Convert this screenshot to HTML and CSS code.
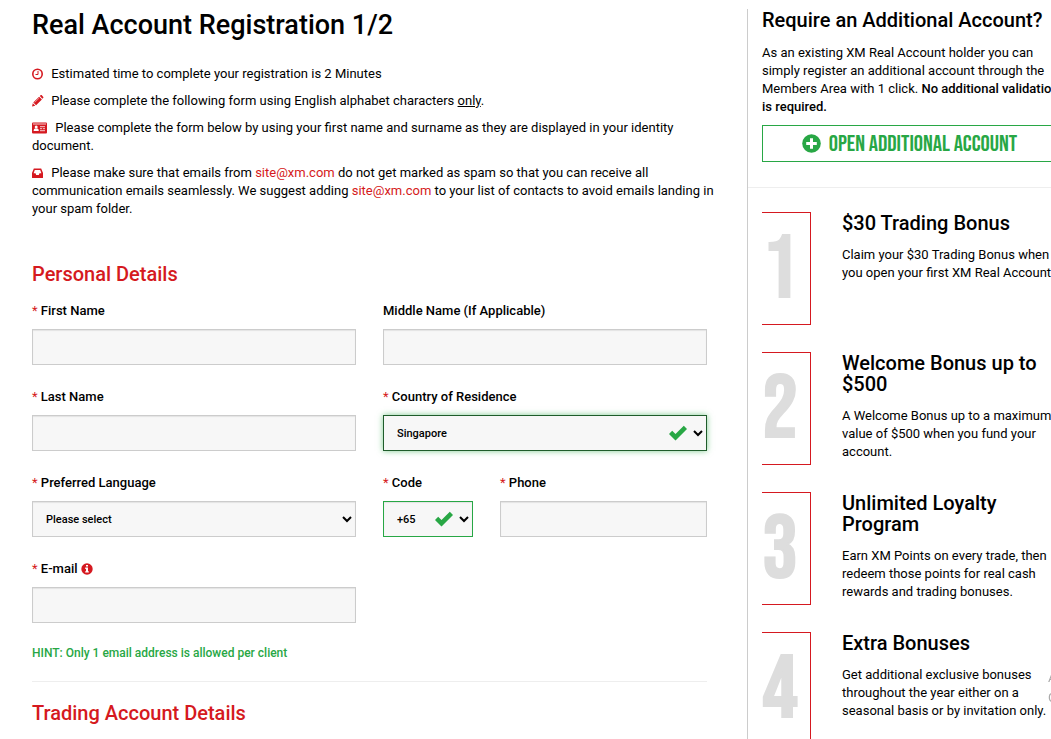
FILE: index.html
```html
<!DOCTYPE html>
<html lang="en">

<head>
    <meta charset="UTF-8">
    <meta name="viewport" content="width=device-width, initial-scale=1.0">
    <title>Real Account Registration</title>
    <link rel="stylesheet" href="styles.css">
</head>

<body>

    <div class="page">
        <main class="content">
            <h1>Real Account Registration 1/2</h1>

            <!-- Notes -->
            <ul class="notes">
                <li>
                    <svg class="icon" width="12" height="12" viewBox="0 0 12 12"><circle cx="5.500" cy="6" r="4.700" fill="none" stroke="currentColor" stroke-width="1.600"/><path d="M6 3v3.500H3.500" fill="none" stroke="currentColor" stroke-width="1"/></svg>
                    Estimated time to complete your registration is 2 Minutes
                </li>
                <li>
                    <svg class="icon" width="12" height="12" viewBox="0 0 12 12"><path d="M0 11.5l.8-3.2 2.5 2.500zM1.300 7.500L7.100 1.700l2.800 2.800-5.800 5.800zM7.800 1l1-.900q.4-.300.800 0l1.700 1.900q.3.400 0 .800l-.900 1z" fill="currentColor"/><path d="M2.600 7.500l4.500-4.400" stroke="#fff" stroke-width=".5"/></svg>
                    Please complete the following form using English alphabet characters <u>only</u>.
                </li>
                <li>
                    <svg class="icon icon-wide" width="15" height="12" viewBox="0 0 15 12"><path d="M1 .5h13q1 0 1 1v9q0 1-1 1H1q-1 0-1-1v-9q0-1 1-1z" fill="currentColor"/><path d="M1 2h13M8 4.700h5M8 6.700h2.200M11 6.700h2M8 8.700h5" stroke="#fff" stroke-width=".8"/><circle cx="4.200" cy="5" r="1.500" fill="#fff"/><path d="M1.600 9q0-2.600 1.400-2.600h2.400Q6.800 6.400 6.800 9z" fill="#fff"/></svg>
                    Please complete the form below by using your first name and surname as they are displayed in your identity document.
                </li>
                <li>
                    <svg class="icon" width="12" height="12" viewBox="0 0 12 12"><path d="M1.800 1.500h7.400L11 6v4.500q0 .5-.5.500H.5q-.5 0-.5-.5V6z" fill="currentColor"/><path d="M2.800 3h5.400l1.200 3.300H7.500L6.800 8H4.200l-.7-1.700H1.600z" fill="#fff"/></svg>
                    Please make sure that emails from <a href="#">site@xm.com</a> do not get marked as spam so that you can receive all communication emails seamlessly. We suggest adding <a href="#">site@xm.com</a> to your list of contacts to avoid emails landing in your spam folder.
                </li>
            </ul>

            <!-- Registration form -->
            <form>
                <h2>Personal Details</h2>
                <div class="fields">
                    <div class="field">
                        <label for="first-name"><span class="required">*</span> First Name</label>
                        <input type="text" id="first-name">
                    </div>
                    <div class="field">
                        <label for="middle-name">Middle Name (If Applicable)</label>
                        <input type="text" id="middle-name">
                    </div>
                    <div class="field">
                        <label for="last-name"><span class="required">*</span> Last Name</label>
                        <input type="text" id="last-name">
                    </div>
                    <div class="field">
                        <label for="country"><span class="required">*</span> Country of Residence</label>
                        <div class="select-box">
                            <select id="country" class="valid active">
                                <option>Singapore</option>
                            </select>
                            <svg class="check" width="20" height="16" viewBox="0 0 20 16"><path d="M1 9l3.200-3.200 3.300 3.300L15.800.8 19 4 7.500 15.500z" fill="currentColor"/></svg>
                        </div>
                    </div>
                    <div class="field">
                        <label for="language"><span class="required">*</span> Preferred Language</label>
                        <select id="language">
                            <option>Please select</option>
                        </select>
                    </div>
                    <div class="phone-row">
                        <div class="field code">
                            <label for="code"><span class="required">*</span> Code</label>
                            <div class="select-box">
                                <select id="code" class="valid">
                                    <option>+65</option>
                                </select>
                                <svg class="check" width="20" height="16" viewBox="0 0 20 16"><path d="M1 9l3.200-3.200 3.300 3.300L15.800.8 19 4 7.500 15.500z" fill="currentColor"/></svg>
                            </div>
                        </div>
                        <div class="field phone">
                            <label for="phone"><span class="required">*</span> Phone</label>
                            <input type="tel" id="phone">
                        </div>
                    </div>
                    <div class="field">
                        <label for="email"><span class="required">*</span> E-mail
                            <svg class="info" width="12" height="12" viewBox="0 0 12 12"><circle cx="6" cy="6" r="5.700" fill="currentColor"/><path d="M5 2h2v1.600H5zM4.200 4.600H7v3.600h.8v1.400H4.200V8.200H5V6h-.8z" fill="#fff"/></svg>
                        </label>
                        <input type="email" id="email">
                    </div>
                </div>
                <p class="hint">HINT: Only 1 email address is allowed per client</p>
                <hr>
                <h2>Trading Account Details</h2>
            </form>
        </main>

        <aside class="sidebar">
            <section class="additional">
                <h3>Require an Additional Account?</h3>
                <p>As an existing XM Real Account holder you can simply register an additional account through the Members Area with 1 click. <strong>No additional validation is required.</strong></p>
                <button type="button" class="open-btn">
                    <svg width="19" height="19" viewBox="0 0 19 19"><circle cx="9.500" cy="9.500" r="9.300" fill="currentColor"/><path d="M9.500 4.200v10.600M4.200 9.500h10.600" stroke="#fff" stroke-width="3"/></svg>
                    <span>OPEN ADDITIONAL ACCOUNT</span>
                </button>
            </section>

            <!-- Bonus list -->
            <section class="bonuses">
                <div class="bonus">
                    <div class="number">1</div>
                    <div class="bonus-text">
                        <h3>$30 Trading Bonus</h3>
                        <p>Claim your $30 Trading Bonus when you open your first XM Real Account.</p>
                    </div>
                </div>
                <div class="bonus">
                    <div class="number">2</div>
                    <div class="bonus-text">
                        <h3>Welcome Bonus up to $500</h3>
                        <p>A Welcome Bonus up to a maximum value of $500 when you fund your account.</p>
                    </div>
                </div>
                <div class="bonus">
                    <div class="number">3</div>
                    <div class="bonus-text">
                        <h3>Unlimited Loyalty Program</h3>
                        <p>Earn XM Points on every trade, then redeem those points for real cash rewards and trading bonuses.</p>
                    </div>
                </div>
                <div class="bonus">
                    <div class="number">4</div>
                    <div class="bonus-text">
                        <h3>Extra Bonuses</h3>
                        <p>Get additional exclusive bonuses throughout the year either on a seasonal basis or by invitation only.</p>
                    </div>
                </div>
            </section>
        </aside>
    </div>

    <div class="watermark">A<br>G</div>

</body>

</html>
```
FILE: styles.css
```css
* {
    margin: 0;
    padding: 0;
    box-sizing: border-box;
}

body {
    font-family: Roboto, "Liberation Sans", sans-serif;
    font-size: 13px;
    line-height: 18px;
    color: #000;
    background: #fff;
    overflow: hidden;
}

.page {
    display: flex;
    min-height: 100vh;
    padding-top: 9px;
    /* sidebar runs slightly past the window edge */
    margin-right: -6px;
}

.content {
    flex: 1;
    min-width: 0;
    padding: 0 40px 0 32px;
}

h1 {
    font-size: 27px;
    font-weight: 500;
    line-height: 32px;
    margin-bottom: 24px;
}

/* Notes */
.notes {
    list-style: none;
    margin: 0 -12px 44px 0;
}

.notes li {
    margin-bottom: 9px;
}

.notes a {
    color: #d51920;
    text-decoration: none;
}

.icon {
    color: #d51920;
    vertical-align: -2px;
    margin-right: 4px;
}

.icon-wide {
    margin-right: 5px;
}

/* Form */
h2 {
    font-size: 20px;
    font-weight: 500;
    line-height: 24px;
    color: #d51920;
    margin-bottom: 16px;
}

.fields {
    display: grid;
    grid-template-columns: 1fr 1fr;
    gap: 23px 27px;
}

.field {
    min-width: 0;
}

.phone-row {
    display: flex;
    gap: 27px;
}

.code {
    flex: 0 0 90px;
}

.phone {
    flex: 1;
}

label {
    display: block;
    font-weight: 500;
    margin-bottom: 9px;
}

.required {
    color: #d51920;
    font-weight: 400;
}

.info {
    color: #d51920;
    vertical-align: -2px;
}

input,
select {
    display: block;
    width: 100%;
    height: 36px;
    padding: 0 9px;
    border: 1px solid #ccc;
    border-radius: 0;
    background-color: #f7f7f7;
    box-shadow: inset 0 1px 1px rgba(0, 0, 0, 0.08);
    font-family: inherit;
    font-size: 11px;
    font-weight: 500;
    color: #000;
}

.select-box {
    position: relative;
}

select {
    padding: 0 1px 0 9px;
}

.valid {
    border-color: #28a745;
}

.active {
    border-color: #1f5c2b;
    box-shadow: 0 0 6px rgba(40, 167, 69, 0.6);
}

.check {
    position: absolute;
    top: 10px;
    right: 19px;
    color: #28a745;
    pointer-events: none;
}

.hint {
    margin-top: 21px;
    font-size: 12px;
    font-weight: 500;
    color: #28a745;
}

hr {
    border: none;
    border-top: 1px solid #eee;
    margin: 19px 0;
}

/* Sidebar */
.sidebar {
    flex: 0 0 310px;
    border-left: 1px solid #ccc;
}

.sidebar h3 {
    font-size: 20px;
    font-weight: 500;
    line-height: 21px;
    margin-bottom: 13px;
}

.sidebar p {
    margin-right: -6px;
}

.sidebar strong {
    font-weight: 500;
}

.additional {
    padding: 1px 0 25px 14px;
    border-bottom: 1px solid #eee;
}

.open-btn {
    display: flex;
    align-items: center;
    justify-content: center;
    gap: 8px;
    width: 100%;
    height: 37px;
    margin-top: 9px;
    border: 1px solid #28a745;
    background: #fff;
    color: #28a745;
    font-family: "Bebas Neue", "Roboto Condensed", "Liberation Sans Narrow", sans-serif;
    font-size: 23px;
    font-weight: 400;
    white-space: nowrap;
    cursor: pointer;
}

.bonuses {
    display: flex;
    flex-direction: column;
    gap: 27px;
    padding: 24px 0 0 14px;
}

.bonus {
    display: flex;
    align-items: flex-start;
    gap: 31px;
}

.bonus-text {
    flex: 1;
    min-width: 0;
    padding-top: 1px;
}

.sidebar .bonus-text h3 {
    margin-bottom: 12px;
}

.number {
    flex: 0 0 49px;
    min-width: 0;
    height: 113px;
    padding-right: 12px;
    border: 1px solid #d51920;
    border-left: none;
    font-family: "Bebas Neue", "Roboto Condensed", "Liberation Sans Narrow", sans-serif;
    font-size: 88px;
    font-weight: 400;
    line-height: 116px;
    text-align: center;
    color: #ddd;
    -webkit-text-stroke: 2px #ddd;
}

.watermark {
    position: fixed;
    top: 668px;
    left: calc(100% - 3px);
    font-size: 13px;
    line-height: 20px;
    color: #aaa;
}
```
